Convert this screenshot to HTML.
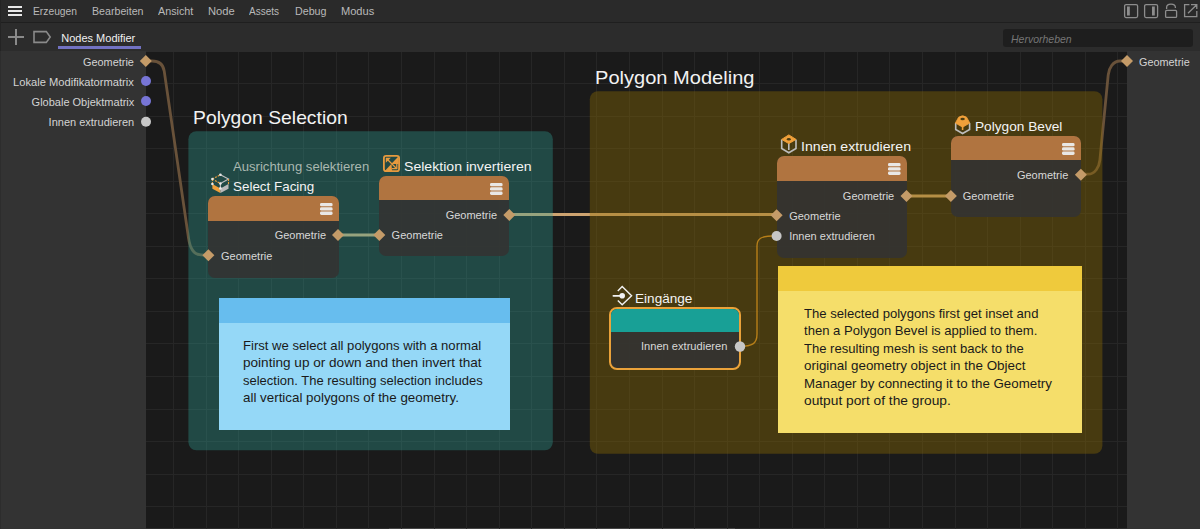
<!DOCTYPE html>
<html><head><meta charset="utf-8">
<style>
*{margin:0;padding:0;box-sizing:border-box}
html,body{width:1200px;height:529px;overflow:hidden;background:#1a1a1a;font-family:"Liberation Sans",sans-serif;position:relative}
.a{position:absolute}
.t{position:absolute;white-space:nowrap;line-height:1.117}
svg{position:absolute;left:0;top:0}
</style></head><body>
<div class="a" style="left:0;top:0;width:1200px;height:22px;background:#2a2a2a"></div>
<div class="a" style="left:0;top:22px;width:1200px;height:1px;background:#1f1f1f"></div>
<div class="a" style="left:0;top:23px;width:1200px;height:28px;background:#2c2c2c"></div>
<div class="a" style="left:0;top:51px;width:146px;height:478px;background:#333333"></div>
<div class="a" style="left:1127px;top:51px;width:73px;height:478px;background:#333333"></div>
<div class="a" style="left:146px;top:528px;width:981px;height:1px;background:#2c2c2c"></div>
<div class="a" style="left:389px;top:528px;width:346px;height:1px;background:#454545"></div>
<div class="a" style="left:0;top:0;width:1px;height:51px;background:#242424"></div>
<div class="a" style="left:0;top:51px;width:1px;height:478px;background:#2d2d2d"></div>
<svg width="1200" height="529" viewBox="0 0 1200 529">
<defs><clipPath id="cv"><rect x="146" y="51" width="981" height="478"/></clipPath></defs>
<g clip-path="url(#cv)">
<path d="M173.5 51V529 M206.5 51V529 M238.5 51V529 M271.5 51V529 M303.5 51V529 M336.5 51V529 M368.5 51V529 M401.5 51V529 M434.5 51V529 M466.5 51V529 M499.5 51V529 M531.5 51V529 M564.5 51V529 M596.5 51V529 M629.5 51V529 M662.5 51V529 M694.5 51V529 M727.5 51V529 M759.5 51V529 M792.5 51V529 M824.5 51V529 M857.5 51V529 M889.5 51V529 M922.5 51V529 M955.5 51V529 M987.5 51V529 M1020.5 51V529 M1052.5 51V529 M1085.5 51V529 M1117.5 51V529 M146 83.5H1127 M146 116.5H1127 M146 148.5H1127 M146 181.5H1127 M146 213.5H1127 M146 246.5H1127 M146 278.5H1127 M146 311.5H1127 M146 343.5H1127 M146 376.5H1127 M146 409.5H1127 M146 441.5H1127 M146 474.5H1127 M146 506.5H1127" stroke="#262626" stroke-width="1" fill="none" shape-rendering="crispEdges"/>
<path d="M145.8 61 L152 61 C158.5 61 163 63.5 164.2 71 L188.5 238 C189.8 247 193 254.8 201 254.8 L208.4 255.4" stroke="#69523a" stroke-width="2.8" fill="none"/>
<path d="M338 235 H379.3" stroke="#cda370" stroke-width="3.2" fill="none"/>
<path d="M509.3 214.5 H776.6" stroke="#cda370" stroke-width="3.2" fill="none"/>
<path d="M906.5 196 H950.9" stroke="#cda370" stroke-width="3.2" fill="none"/>
<path d="M1080.7 174.2 L1088 174.2 C1095 174.2 1099.2 167 1099.9 160 L1108.2 75 C1108.9 68 1113 61 1120 61 L1127 61" stroke="#69523a" stroke-width="2.8" fill="none"/>
<path d="M739.7 346.3 C752 346.3 757 344 757 334 L757 246 C757 239 760 235.7 776.6 235.7" stroke="#d08a28" stroke-width="1.4" fill="none"/>
<rect x="188.4" y="131.2" width="364.4" height="319.1" rx="8" fill="rgba(50,162,152,0.35)"/>
<rect x="589.8" y="91.2" width="512.6" height="362.6" rx="8" fill="rgba(145,110,0,0.38)"/>
</g></svg>
<div class="a" style="left:146px;top:51px;width:981px;height:1px;background:#2c2c2c"></div>
<svg width="40" height="22" style="left:0;top:0"><path d="M8 7H22M8 11H22M8 15H22" stroke="#e8e8e8" stroke-width="2"/></svg>
<div class="t" style="left:32.50px;top:5.00px;font-size:11px;color:#b9b9b9;transform:scaleX(0.9344);transform-origin:0 0;">Erzeugen</div>
<div class="t" style="left:91.50px;top:5.00px;font-size:11px;color:#b9b9b9;transform:scaleX(0.9679);transform-origin:0 0;">Bearbeiten</div>
<div class="t" style="left:158.00px;top:5.00px;font-size:11px;color:#b9b9b9;transform:scaleX(0.9786);transform-origin:0 0;">Ansicht</div>
<div class="t" style="left:208.30px;top:5.00px;font-size:11px;color:#b9b9b9;transform:scaleX(1.0153);transform-origin:0 0;">Node</div>
<div class="t" style="left:249.20px;top:5.00px;font-size:11px;color:#b9b9b9;transform:scaleX(0.9088);transform-origin:0 0;">Assets</div>
<div class="t" style="left:294.70px;top:5.00px;font-size:11px;color:#b9b9b9;transform:scaleX(0.9718);transform-origin:0 0;">Debug</div>
<div class="t" style="left:341.30px;top:5.00px;font-size:11px;color:#b9b9b9;transform:scaleX(1.0055);transform-origin:0 0;">Modus</div>
<svg width="80" height="22" style="left:1120px;top:0" fill="none" stroke="#8d8d8d" stroke-width="1.3">
<rect x="4.6" y="4.6" width="13" height="13" rx="1.5"/><rect x="7" y="6.5" width="2.8" height="9" fill="#8d8d8d" stroke="none"/>
<rect x="24.6" y="4.6" width="13" height="13" rx="1.5"/><rect x="32" y="6.5" width="2.8" height="9" fill="#8d8d8d" stroke="none"/>
<path d="M46.6 9V7.5C46.6 5.5 48.3 4.2 51 4.2C53.7 4.2 55.4 5.5 55.4 7.5V8"/><rect x="45.6" y="10.4" width="11" height="7" rx="1"/>
<path d="M69.4 4.6H64.6V16.6H76.8V11M68 13.2L76.2 5.2M71 4.6H76.8V9"/>
</svg>
<svg width="60" height="28" style="left:0;top:23px" fill="none" stroke="#8a8a8a" stroke-width="2">
<path d="M16 6V22M8 14H24"/>
<path d="M34 8.6H46.3L50.2 14L46.3 19.4H34Z" stroke-width="1.6"/>
</svg>
<div class="t" style="left:61.25px;top:32.00px;font-size:11px;color:#f0f0f0;">Nodes Modifier</div>
<div class="a" style="left:58px;top:46px;width:83px;height:3px;background:#7272c2"></div>
<div class="a" style="left:1003px;top:29px;width:190px;height:17.5px;background:#1e1e1e;border-radius:3px"></div>
<div class="t" style="left:1011.00px;top:34.00px;font-size:10.5px;color:#767676;font-style:italic;">Hervorheben</div>
<div class="t" style="left:83.20px;top:56.00px;font-size:11px;color:#d4d4d4;transform:scaleX(0.9911);transform-origin:0 0;">Geometrie</div>
<div class="t" style="left:13.20px;top:76.00px;font-size:11px;color:#d4d4d4;transform:scaleX(1.0141);transform-origin:0 0;">Lokale Modifikatormatrix</div>
<div class="t" style="left:31.60px;top:96.00px;font-size:11px;color:#d4d4d4;">Globale Objektmatrix</div>
<div class="t" style="left:48.60px;top:116.00px;font-size:11px;color:#d4d4d4;">Innen extrudieren</div>
<div class="t" style="left:1139.30px;top:56.00px;font-size:11px;color:#d4d4d4;transform:scaleX(0.9873);transform-origin:0 0;">Geometrie</div>
<div class="t" style="left:193.40px;top:107.00px;font-size:19px;color:#f2f2f2;transform:scaleX(1.0170);transform-origin:0 0;">Polygon Selection</div>
<div class="t" style="left:594.75px;top:67.00px;font-size:19px;color:#f2f2f2;transform:scaleX(1.0559);transform-origin:0 0;">Polygon Modeling</div>
<div class="a" style="left:208.30px;top:196.00px;width:130.30px;height:81.80px;border-radius:7px;background:rgba(51,51,50,0.9);overflow:hidden;"><div class="a" style="left:0;top:0;width:100%;height:25.00px;background:#b07440"></div></div>
<svg width="14" height="14" style="left:319.70px;top:202.90px" fill="#e9e7e5"><rect x="0" y="0" width="12.6" height="3.3" rx="1.4"/><rect x="0" y="4.3" width="12.6" height="3.3" rx="1.4"/><rect x="0" y="8.6" width="12.6" height="3.3" rx="1.4"/></svg>
<div class="a" style="left:379.30px;top:176.00px;width:130.00px;height:80.20px;border-radius:7px;background:rgba(51,51,50,0.9);overflow:hidden;"><div class="a" style="left:0;top:0;width:100%;height:24.20px;background:#b07440"></div></div>
<svg width="14" height="14" style="left:490.40px;top:182.90px" fill="#e9e7e5"><rect x="0" y="0" width="12.6" height="3.3" rx="1.4"/><rect x="0" y="4.3" width="12.6" height="3.3" rx="1.4"/><rect x="0" y="8.6" width="12.6" height="3.3" rx="1.4"/></svg>
<div class="a" style="left:776.60px;top:155.80px;width:130.40px;height:102.10px;border-radius:7px;background:rgba(51,51,50,0.9);overflow:hidden;"><div class="a" style="left:0;top:0;width:100%;height:25.20px;background:#b07440"></div></div>
<svg width="14" height="14" style="left:888.10px;top:162.70px" fill="#e9e7e5"><rect x="0" y="0" width="12.6" height="3.3" rx="1.4"/><rect x="0" y="4.3" width="12.6" height="3.3" rx="1.4"/><rect x="0" y="8.6" width="12.6" height="3.3" rx="1.4"/></svg>
<div class="a" style="left:950.90px;top:136.10px;width:130.00px;height:80.90px;border-radius:7px;background:rgba(51,51,50,0.9);overflow:hidden;"><div class="a" style="left:0;top:0;width:100%;height:24.30px;background:#b07440"></div></div>
<svg width="14" height="14" style="left:1062.00px;top:143.00px" fill="#e9e7e5"><rect x="0" y="0" width="12.6" height="3.3" rx="1.4"/><rect x="0" y="4.3" width="12.6" height="3.3" rx="1.4"/><rect x="0" y="8.6" width="12.6" height="3.3" rx="1.4"/></svg>
<div class="a" style="left:609.10px;top:307.00px;width:132.20px;height:62.60px;border-radius:8px;background:rgba(51,51,50,0.9);overflow:hidden;border:2px solid #eaa23a;"><div class="a" style="left:0;top:0;width:100%;height:23.20px;background:#18a096"></div></div>
<div class="t" style="left:233.00px;top:160.00px;font-size:12.6px;color:#a9b8b0;transform:scaleX(1.0403);transform-origin:0 0;">Ausrichtung selektieren</div>
<div class="t" style="left:233.00px;top:180.00px;font-size:13.3px;color:#f4f4f4;transform:scaleX(1.0083);transform-origin:0 0;">Select Facing</div>
<div class="t" style="left:274.65px;top:229.00px;font-size:11px;color:#d8d8d8;">Geometrie</div>
<div class="t" style="left:221.00px;top:250.00px;font-size:11px;color:#d8d8d8;">Geometrie</div>
<div class="t" style="left:404.10px;top:159.00px;font-size:13.5px;color:#f4f4f4;transform:scaleX(1.0440);transform-origin:0 0;">Selektion invertieren</div>
<div class="t" style="left:445.65px;top:209.00px;font-size:11px;color:#d8d8d8;">Geometrie</div>
<div class="t" style="left:391.60px;top:229.00px;font-size:11px;color:#d8d8d8;">Geometrie</div>
<div class="t" style="left:801.20px;top:139.00px;font-size:13.5px;color:#f4f4f4;transform:scaleX(1.0469);transform-origin:0 0;">Innen extrudieren</div>
<div class="t" style="left:842.85px;top:190.00px;font-size:11px;color:#d8d8d8;">Geometrie</div>
<div class="t" style="left:789.20px;top:210.00px;font-size:11px;color:#d8d8d8;">Geometrie</div>
<div class="t" style="left:789.20px;top:230.00px;font-size:11px;color:#d8d8d8;">Innen extrudieren</div>
<div class="t" style="left:975.40px;top:119.00px;font-size:13.5px;color:#f4f4f4;transform:scaleX(1.0126);transform-origin:0 0;">Polygon Bevel</div>
<div class="t" style="left:1016.95px;top:169.00px;font-size:11px;color:#d8d8d8;">Geometrie</div>
<div class="t" style="left:962.80px;top:190.00px;font-size:11px;color:#d8d8d8;">Geometrie</div>
<div class="t" style="left:635.00px;top:291.00px;font-size:13.5px;color:#f4f4f4;transform:scaleX(1.0061);transform-origin:0 0;">Eingänge</div>
<div class="t" style="left:641.10px;top:340.00px;font-size:11px;color:#d8d8d8;transform:scaleX(1.0091);transform-origin:0 0;">Innen extrudieren</div>
<div class="a" style="left:218.60px;top:298.00px;width:291.00px;height:131.70px;background:#95d8f7"><div class="a" style="left:0;top:0;width:100%;height:25.30px;background:#67bdee"></div></div>
<div class="t" style="left:243.40px;top:339.00px;font-size:12.8px;color:#1a1a1a;transform:scaleX(1.0239);transform-origin:0 0;">First we select all polygons with a normal</div>
<div class="t" style="left:243.40px;top:356.00px;font-size:12.8px;color:#1a1a1a;transform:scaleX(1.0610);transform-origin:0 0;">pointing up or down and then invert that</div>
<div class="t" style="left:243.40px;top:374.00px;font-size:12.8px;color:#1a1a1a;transform:scaleX(1.0157);transform-origin:0 0;">selection. The resulting selection includes</div>
<div class="t" style="left:243.40px;top:391.00px;font-size:12.8px;color:#1a1a1a;transform:scaleX(1.0440);transform-origin:0 0;">all vertical polygons of the geometry.</div>
<div class="a" style="left:778.30px;top:266.00px;width:303.90px;height:166.80px;background:#f5de6a"><div class="a" style="left:0;top:0;width:100%;height:24.90px;background:#efca3c"></div></div>
<div class="t" style="left:803.50px;top:307.00px;font-size:12.8px;color:#1a1a1a;transform:scaleX(1.0235);transform-origin:0 0;">The selected polygons first get inset and</div>
<div class="t" style="left:803.50px;top:324.00px;font-size:12.8px;color:#1a1a1a;transform:scaleX(1.0218);transform-origin:0 0;">then a Polygon Bevel is applied to them.</div>
<div class="t" style="left:803.50px;top:342.00px;font-size:12.8px;color:#1a1a1a;transform:scaleX(1.0200);transform-origin:0 0;">The resulting mesh is sent back to the</div>
<div class="t" style="left:803.50px;top:359.00px;font-size:12.8px;color:#1a1a1a;transform:scaleX(1.0482);transform-origin:0 0;">original geometry object in the Object</div>
<div class="t" style="left:803.50px;top:377.00px;font-size:12.8px;color:#1a1a1a;transform:scaleX(1.0405);transform-origin:0 0;">Manager by connecting it to the Geometry</div>
<div class="t" style="left:803.50px;top:394.00px;font-size:12.8px;color:#1a1a1a;transform:scaleX(1.0744);transform-origin:0 0;">output port of the group.</div>
<svg width="1200" height="529">
<path d="M139.80 61.00L145.80 55.00L151.80 61.00L145.80 67.00Z" fill="#c49b68"/>
<circle cx="146.00" cy="81.00" r="5" fill="#7775d6"/>
<circle cx="146.00" cy="101.00" r="5" fill="#7775d6"/>
<circle cx="146.00" cy="121.70" r="5" fill="#c8c8c8"/>
<path d="M1121.00 61.00L1127.00 55.00L1133.00 61.00L1127.00 67.00Z" fill="#c49b68"/>
<path d="M332.00 235.00L338.00 229.00L344.00 235.00L338.00 241.00Z" fill="#c49b68"/>
<path d="M202.40 255.30L208.40 249.30L214.40 255.30L208.40 261.30Z" fill="#c49b68"/>
<path d="M503.30 215.00L509.30 209.00L515.30 215.00L509.30 221.00Z" fill="#c49b68"/>
<path d="M373.30 235.00L379.30 229.00L385.30 235.00L379.30 241.00Z" fill="#c49b68"/>
<path d="M900.50 196.00L906.50 190.00L912.50 196.00L906.50 202.00Z" fill="#c49b68"/>
<path d="M770.60 215.30L776.60 209.30L782.60 215.30L776.60 221.30Z" fill="#c49b68"/>
<circle cx="776.60" cy="236.00" r="5" fill="#c6c6c6"/>
<path d="M1074.90 174.80L1080.90 168.80L1086.90 174.80L1080.90 180.80Z" fill="#c49b68"/>
<path d="M944.90 196.00L950.90 190.00L956.90 196.00L950.90 202.00Z" fill="#c49b68"/>
<circle cx="740.00" cy="346.50" r="5.2" fill="#c6c6c6"/>
<g stroke-width="1.1" fill="none">
<path d="M212.4 184L220.4 188.4L220.4 193L212.4 188.7Z" fill="#f0a03a" stroke="none"/>
<path d="M220.4 188.4L228.5 184L228.5 188.7L220.4 193Z" fill="#b9b9b9" stroke="none"/>
<path d="M212.4 179L220.4 174.8M212.4 179L220.4 183.5M212.4 179V184" stroke="#f0a03a" stroke-dasharray="2 1"/>
<path d="M220.4 174.8L228.5 179L220.4 183.5V188.4" stroke="#c0c0c0"/>
<path d="M228.5 179V184" stroke="#f0a03a" stroke-dasharray="2 1"/>
<circle cx="220.4" cy="174.8" r="1.3" fill="#e8e8e8" stroke="none"/><circle cx="212.4" cy="179" r="1.3" fill="#e8e8e8" stroke="none"/>
<circle cx="220.4" cy="183.5" r="1.3" fill="#e8e8e8" stroke="none"/><circle cx="212.4" cy="184" r="1.3" fill="#e8e8e8" stroke="none"/>
<circle cx="220.4" cy="188.4" r="1.3" fill="#e8e8e8" stroke="none"/>
</g>
<g fill="none" stroke="#e69a3e" stroke-width="1.8">
<rect x="383.9" y="155.9" width="15.2" height="15.2" rx="2.2"/>
<path d="M384.8 171L391.5 163.8L392 171Z" fill="#e69a3e" stroke="none"/>
<path d="M398.6 156.2L398.6 164L391.2 164Z" fill="#e69a3e" stroke="none"/>
<path d="M385.8 157.8L390.8 157.8L385.8 162.8Z" fill="#e69a3e" stroke="none"/>
<path d="M386.5 158.5L396.5 168.5" stroke-width="1.3"/>
<path d="M392 168.7H396.8V163.9" stroke-width="1.3"/>
</g>
<g fill="none" stroke-width="1.6">
<path d="M781.7 139.4V148.5L788.8 152.7L796 148.5V139.4M788.8 143V150" stroke="#bdbdbd"/>
<path d="M781.7 139.4L788.8 134.9L796 139.4L788.8 143.6Z" fill="#f0a03a" stroke="#f0a03a" stroke-width="1"/>
<ellipse cx="788.8" cy="139.3" rx="2" ry="1.2" fill="#4a3c12"/>
</g>
<g fill="none" stroke-width="1.6">
<path d="M955.7 123V129.5L962.6 133.5L969.6 129.5V123" stroke="#bdbdbd"/>
<path d="M955.4 123L958.6 117.2Q962.6 114.4 966.6 117.2L969.8 123L962.6 127.2Z" fill="#f0a03a" stroke="#f0a03a" stroke-width="0.8"/>
<path d="M962.6 122V130" stroke="#f0a03a"/>
<ellipse cx="962.6" cy="119" rx="2.2" ry="1.2" fill="#4a3c12"/>
</g>
<g fill="none" stroke="#f2f2f2" stroke-width="1.4">
<path d="M617.8 291L622.2 286.4L631.6 295.8L622.2 304.8L617.8 300.4"/>
<path d="M613.4 295.8H620" stroke-width="1.8" stroke-linecap="round"/>
<circle cx="622.2" cy="295.8" r="2.8" fill="#f2f2f2" stroke="none"/>
</g>
</svg>
</body></html>
